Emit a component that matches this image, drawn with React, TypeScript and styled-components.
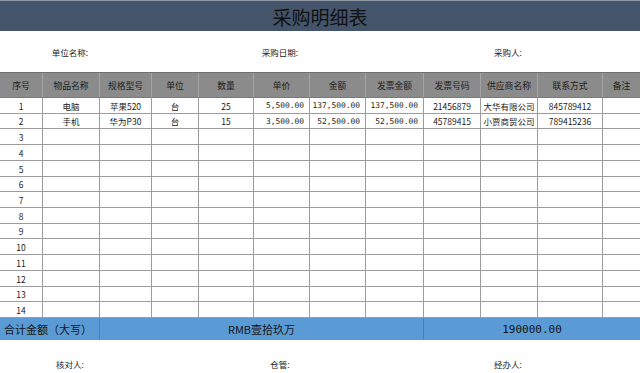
import styled, { createGlobalStyle } from "styled-components";

const GlobalStyle = createGlobalStyle`
  html, body {
    margin: 0;
    padding: 0;
    background: #ffffff;
  }
  body {
    font-family: "Noto Sans CJK SC", "Noto Sans", sans-serif;
    color: #1a1a1a;
  }
`;

const COLS = "43px 57px 52px 47px 55px 56px 56px 58px 57px 57px 65px 37px";

const headers = [
  "序号", "物品名称", "规格型号", "单位", "数量", "单价",
  "金额", "发票金额", "发票号码", "供应商名称", "联系方式", "备注",
];

type Item = {
  name: string;
  spec: string;
  unit: string;
  qty: string;
  price: string;
  amount: string;
  invoiceAmount: string;
  invoiceNo: string;
  supplier: string;
  phone: string;
};

const items: Item[] = [
  {
    name: "电脑", spec: "苹果520", unit: "台", qty: "25", price: "5,500.00",
    amount: "137,500.00", invoiceAmount: "137,500.00", invoiceNo: "21456879",
    supplier: "大华有限公司", phone: "845789412",
  },
  {
    name: "手机", spec: "华为P30", unit: "台", qty: "15", price: "3,500.00",
    amount: "52,500.00", invoiceAmount: "52,500.00", invoiceNo: "45789415",
    supplier: "小贾商贸公司", phone: "789415236",
  },
];

const Page = styled.div`
  width: 640px;
  height: 373px;
  overflow: hidden;
`;

const TitleBar = styled.div`
  height: 30px;
  border-top: 1px solid #8e97a3;
  background: #44546a;
  display: flex;
  align-items: center;
  justify-content: center;
  font-size: 19px;
  color: #111;
`;

const LabelRow = styled.div<{ $h: number; $pad: number }>`
  height: ${(p) => p.$h}px;
  box-sizing: border-box;
  padding-top: ${(p) => p.$pad}px;
  display: grid;
  grid-template-columns: 140px 280px 176px 1fr;
  font-size: 8.5px;
  color: #222;
`;

const Label = styled.div`
  text-align: center;
  line-height: 12px;
`;

const Table = styled.div`
  width: 640px;
  border-top: 1px solid #6f6f6f;
`;

const Row = styled.div<{ $h: number }>`
  display: grid;
  grid-template-columns: ${COLS};
  height: ${(p) => p.$h}px;
  box-sizing: border-box;
`;

const HeadCell = styled.div`
  background: #8b8b8b;
  border-right: 1px solid #a4a4a4;
  border-bottom: 1px solid #7a7a7a;
  display: flex;
  align-items: center;
  justify-content: center;
  font-size: 8.8px;
  color: #1c1c1c;
  &:last-child {
    border-right: none;
  }
`;

const Cell = styled.div<{ $num?: boolean }>`
  border-right: 1px solid #9c9c9c;
  border-bottom: 1px solid #9c9c9c;
  display: flex;
  align-items: center;
  justify-content: ${(p) => (p.$num ? "flex-end" : "center")};
  padding-right: ${(p) => (p.$num ? "5px" : "0")};
  font-family: ${(p) =>
    p.$num ? `"DejaVu Sans Mono", monospace` : `"Noto Sans CJK SC", sans-serif`};
  font-size: ${(p) => (p.$num ? "7.9px" : "8.5px")};
  color: #1a1a1a;
  overflow: hidden;
  white-space: nowrap;
  &:last-child {
    border-right: none;
  }
`;

const TotalRow = styled.div`
  display: grid;
  grid-template-columns: 100px 324px 1fr;
  height: 22px;
  background: #5b9bd5;
`;

const TotalCell = styled.div<{ $left?: boolean; $mono?: boolean }>`
  display: flex;
  align-items: center;
  justify-content: ${(p) => (p.$left ? "flex-start" : "center")};
  padding-left: ${(p) => (p.$left ? "4px" : "0")};
  border-right: 1px solid #4f7fab;
  font-size: 11px;
  font-family: ${(p) =>
    p.$mono ? `"DejaVu Sans Mono", monospace` : `"Noto Sans CJK SC", sans-serif`};
  color: #141414;
  white-space: nowrap;
  &:last-child {
    border-right: none;
  }
`;

export default function App() {
  const rows = Array.from({ length: 14 }, (_, i) => i);
  const heights = rows.map((i) => Math.round((i + 1) * 15.71) - Math.round(i * 15.71));

  return (
    <Page>
      <GlobalStyle />
      <TitleBar>采购明细表</TitleBar>
      <LabelRow $h={41} $pad={15}>
        <Label>单位名称:</Label>
        <Label>采购日期:</Label>
        <Label>采购人:</Label>
      </LabelRow>
      <Table>
        <Row $h={25}>
          {headers.map((h) => (
            <HeadCell key={h}>{h}</HeadCell>
          ))}
        </Row>
        {rows.map((i) => {
          const it = items[i];
          return (
            <Row key={i} $h={heights[i]}>
              <Cell>{i + 1}</Cell>
              <Cell>{it?.name}</Cell>
              <Cell>{it?.spec}</Cell>
              <Cell>{it?.unit}</Cell>
              <Cell>{it?.qty}</Cell>
              <Cell $num>{it?.price}</Cell>
              <Cell $num>{it?.amount}</Cell>
              <Cell $num>{it?.invoiceAmount}</Cell>
              <Cell>{it?.invoiceNo}</Cell>
              <Cell>{it?.supplier}</Cell>
              <Cell>{it?.phone}</Cell>
              <Cell />
            </Row>
          );
        })}
        <TotalRow>
          <TotalCell $left>合计金额（大写）</TotalCell>
          <TotalCell>RMB壹拾玖万</TotalCell>
          <TotalCell $mono>190000.00</TotalCell>
        </TotalRow>
      </Table>
      <LabelRow $h={34} $pad={18}>
        <Label>核对人:</Label>
        <Label>仓管:</Label>
        <Label>经办人:</Label>
      </LabelRow>
    </Page>
  );
}
